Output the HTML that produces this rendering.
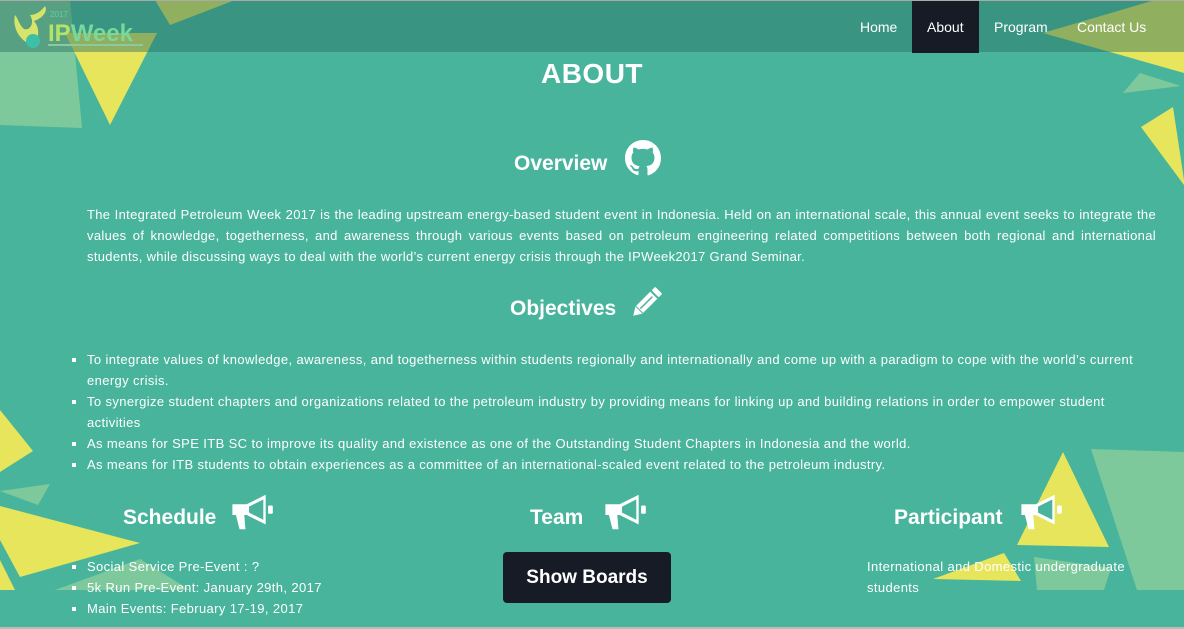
<!DOCTYPE html>
<html><head><meta charset="utf-8"><style>
*{margin:0;padding:0;box-sizing:border-box}
html,body{width:1184px;height:629px;overflow:hidden}
body{background:#48b49c;font-family:"Liberation Sans",sans-serif;color:#fff;position:relative}
#bg{position:absolute;left:0;top:0}
.nav{position:absolute;left:0;top:0;width:1184px;height:52px;background:rgba(40,110,100,0.45);border-top:1px solid #aaa}
.nav a{position:absolute;top:0;height:52px;line-height:52px;font-size:14px;color:#fff;text-decoration:none;padding:0 15px}
.h1{position:absolute;top:58px;width:100%;text-align:center;font-size:28px;font-weight:bold;letter-spacing:0.5px}
.h2{position:absolute;font-size:21px;font-weight:bold}
p.t{position:absolute;left:87px;top:204px;width:1069px;font-size:13px;line-height:21px;text-align:justify;letter-spacing:0.32px}
ul{position:absolute;font-size:13px;line-height:21px;list-style:square;letter-spacing:0.38px}
.btn{position:absolute;left:503px;top:552px;width:168px;height:51px;background:#161b26;border-radius:4px;font-size:19px;font-weight:bold;text-align:center;line-height:51px}
.bottom{position:absolute;left:0;top:627px;width:1184px;height:2px;background:#bbb}
</style></head><body>
<svg id="bg" width="1184" height="629">
<polygon points="0,0 70,0 82,128 0,125" fill="#7ec99c"/>
<polygon points="65,33 157,33 110,125" fill="#e6e55c"/>
<polygon points="155,0 235,0 170,25" fill="#e6e55c"/>
<polygon points="1043,33 1155,0 1184,0 1184,73" fill="#e6e55c"/>
<polygon points="1123,93 1181,86 1140,73" fill="#7ec99c"/>
<polygon points="1141,127 1173,107 1184,180 1184,185" fill="#e6e55c"/>
<polygon points="0,410 33,451 0,472" fill="#e6e55c"/>
<polygon points="0,491 50,484 38,505" fill="#7ec99c"/>
<polygon points="0,506 140,543 20,577 0,540" fill="#e6e55c"/>
<polygon points="0,560 15,590 0,590" fill="#e6e55c"/>
<polygon points="55,590 140,559 190,590" fill="#7ec99c"/>
<polygon points="1063,452 1109,547 1017,545" fill="#e6e55c"/>
<polygon points="1091,449 1184,452 1184,590 1137,590" fill="#7ec99c"/>
<polygon points="933,579 1004,553 1021,581" fill="#e6e55c"/>
<polygon points="1034,557 1111,568 1104,590 1037,590" fill="#7ec99c"/>
</svg>
<div class="nav">
<svg style="position:absolute;left:10px;top:2px" width="150" height="46">
<path d="M5,12 C2,25 10,38 22,42 C30,36 30,25 24,18 C33,15 38,8 35,3 C30,10 24,12 20,12 C25,20 20,28 14,26 C9,22 8,15 5,12Z" fill="#d6e46a"/>
<circle cx="23" cy="38" r="7" fill="#3cc0a8"/>
<text x="40" y="14" font-size="8" fill="#5dd0b0" font-family="Liberation Sans">2017</text>
<text x="38" y="38" font-size="24" font-weight="bold" fill="#b5e36a" font-family="Liberation Sans">IP<tspan fill="#7ad89a">Week</tspan></text>
<rect x="38" y="41" width="95" height="2" fill="#8bc9a0"/>
</svg>
<a style="left:845px">Home</a>
<a style="left:912px;width:67px;background:#161b26">About</a>
<a style="left:979px">Program</a>
<a style="left:1062px">Contact Us</a>
</div>
<div class="h1">ABOUT</div>
<div class="h2" style="left:514px;top:152px">Overview</div>
<svg style="position:absolute;left:625px;top:140px" width="36" height="36" viewBox="0 0 16 16"><path fill="#fff" d="M8 0C3.58 0 0 3.580 0 8c0 3.54 2.29 6.53 5.47 7.590.4.07.55-.17.55-.38v-1.4c-2.230.49-2.7-.94-2.7-.94-.36-.92-.89-1.17-.89-1.17-.73-.5.05-.49.05-.49.8.06 1.23.83 1.23.83.72 1.22 1.88.87 2.33.66.07-.52.28-.87.5-1.07-1.78-.2-3.64-.89-3.64-3.95 0-.87.31-1.59.82-2.150-.08-.2-.36-1.02.08-2.12 0 0 .67-.21 2.2.82a7.6 7.6 0 014 0c1.53-1.04 2.2-.82 2.2-.82.44 1.1.16 1.92.08 2.12.51.56.82 1.27.82 2.150 0 3.07-1.87 3.75-3.65 3.95.29.25.54.73.54 1.48v2.2c0 .21.15.46.55.38A8.010 8.010 0 0016 8c0-4.42-3.58-8-8-8z"/></svg>
<p class="t">The Integrated Petroleum Week 2017 is the leading upstream energy-based student event in Indonesia. Held on an international scale, this annual event seeks to integrate the values of knowledge, togetherness, and awareness through various events based on petroleum engineering related competitions between both regional and international students, while discussing ways to deal with the world’s current energy crisis through the IPWeek2017 Grand Seminar.</p>
<div class="h2" style="left:510px;top:297px">Objectives</div>
<svg style="position:absolute;left:628px;top:285px" width="36" height="36" viewBox="0 0 36 36"><g transform="rotate(45 18 18)"><rect x="13" y="0" width="10" height="5" rx="1" fill="#fff"/><rect x="13" y="7" width="10" height="20" fill="#fff"/><line x1="18" y1="9" x2="18" y2="26" stroke="#48b49c" stroke-width="1.5"/><polygon points="13,28 23,28 18,36" fill="#fff"/></g></svg>
<ul style="left:87px;top:349px;width:1050px">
<li>To integrate values of knowledge, awareness, and togetherness within students regionally and internationally and come up with a paradigm to cope with the world’s current energy crisis.</li>
<li>To synergize student chapters and organizations related to the petroleum industry by providing means for linking up and building relations in order to empower student activities</li>
<li>As means for SPE ITB SC to improve its quality and existence as one of the Outstanding Student Chapters in Indonesia and the world.</li>
<li>As means for ITB students to obtain experiences as a committee of an international-scaled event related to the petroleum industry.</li>
</ul>
<div class="h2" style="left:123px;top:506px">Schedule</div>
<div class="h2" style="left:530px;top:506px">Team</div>
<div class="h2" style="left:894px;top:506px">Participant</div>
<svg style="display:none"><defs><g id="mg"><path d="M2,9 L14,9 L30,1 L30,26 L14,18 L2,18 Z" fill="#fff"/><path d="M16,11 L28,5 L28,22 L16,16Z" fill="#48b49c"/><rect x="32" y="10" width="4" height="7" rx="1" fill="#fff"/><path d="M5,18 L12,18 L13,30 L8,30 Z" fill="#fff"/></g></defs></svg>
<svg style="position:absolute;left:230px;top:492px" width="44" height="40" viewBox="0 0 37 31"><use href="#mg"/></svg>
<svg style="position:absolute;left:603px;top:492px" width="44" height="40" viewBox="0 0 37 31"><use href="#mg"/></svg>
<svg style="position:absolute;left:1019px;top:492px" width="44" height="40" viewBox="0 0 37 31"><use href="#mg"/></svg>
<ul style="left:87px;top:556px;width:360px">
<li>Social Service Pre-Event : ?</li>
<li>5k Run Pre-Event: January 29th, 2017</li>
<li>Main Events: February 17-19, 2017</li>
</ul>
<div class="btn">Show Boards</div>
<div style="position:absolute;left:867px;top:556px;width:275px;font-size:13px;line-height:21px;letter-spacing:0.38px">International and Domestic undergraduate students</div>
<div class="bottom"></div>
</body></html>
